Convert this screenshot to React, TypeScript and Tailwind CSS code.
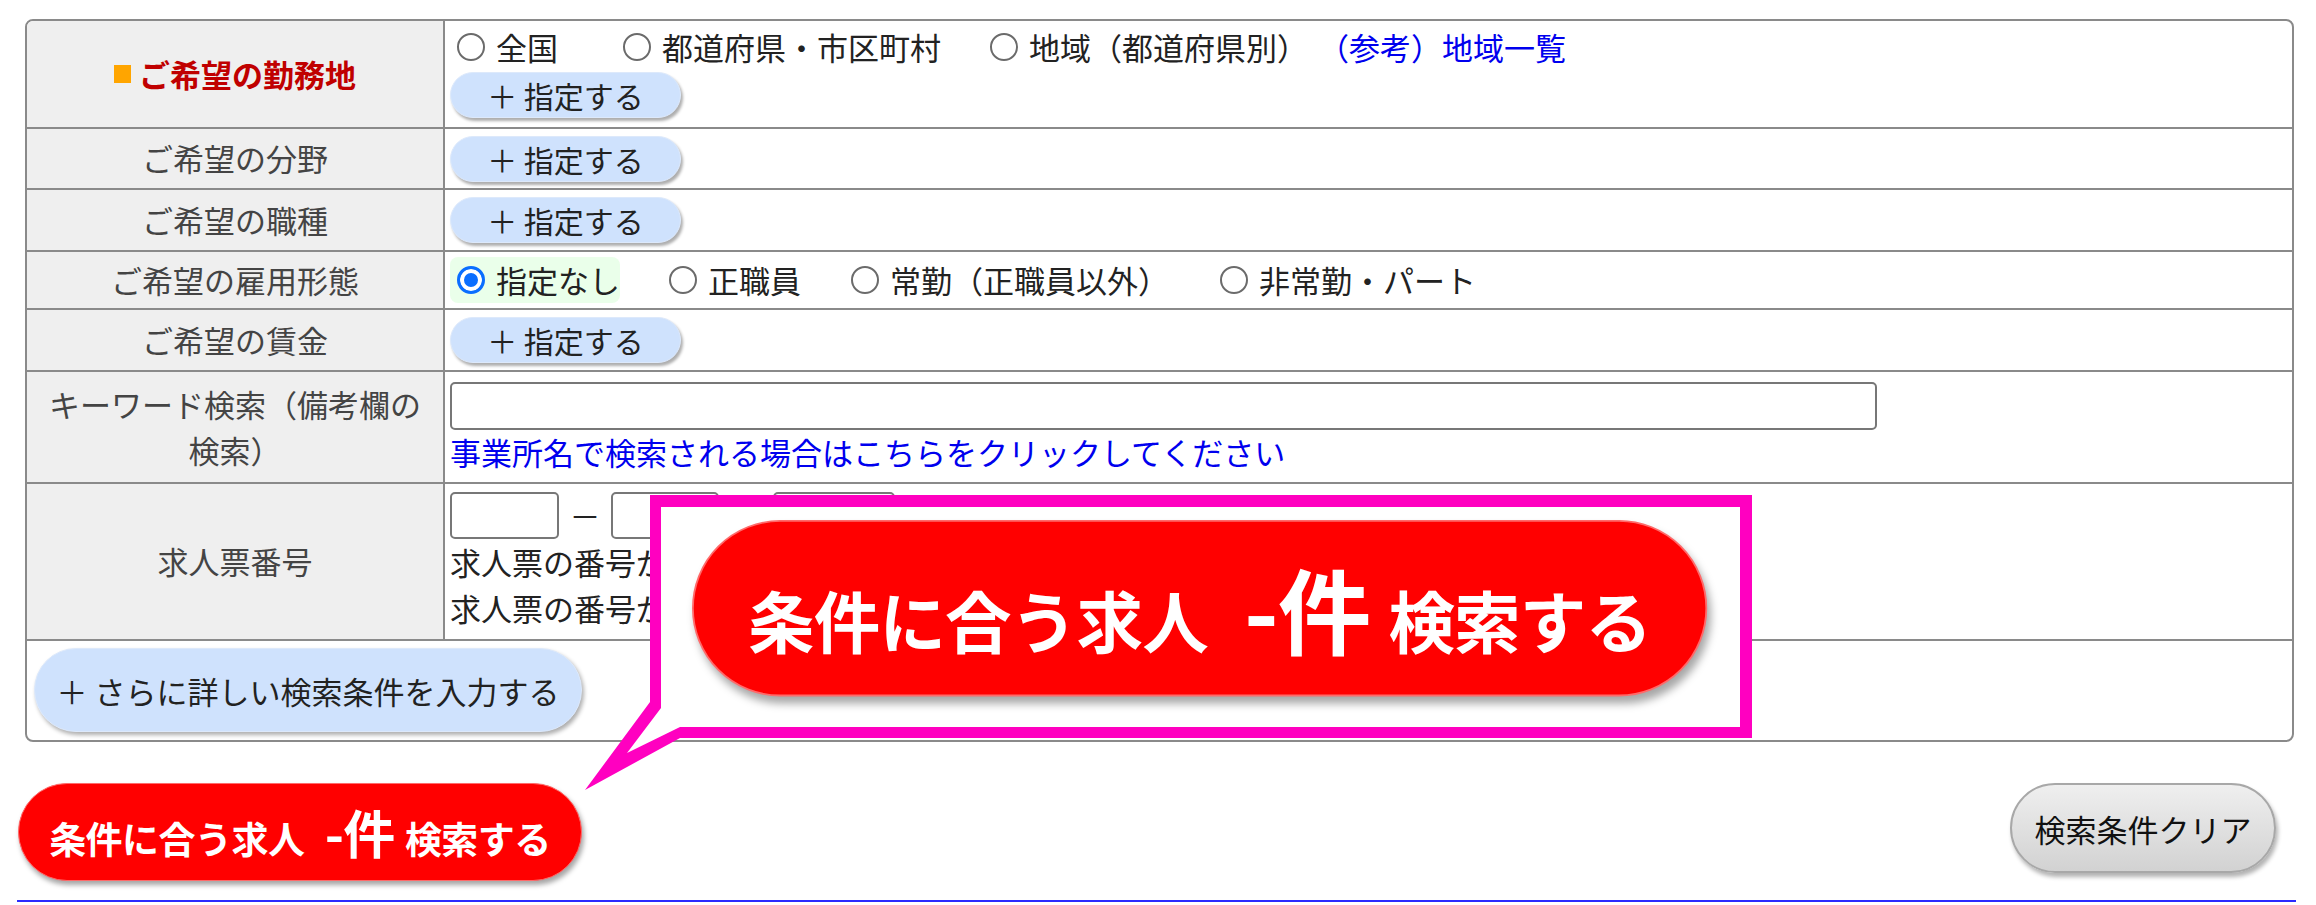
import React from "react";

function Radio({ checked, name }: { checked?: boolean; name: string }) {
  return (
    <input
      type="radio"
      name={name}
      defaultChecked={checked}
      className="appearance-none shrink-0 m-0 w-[28px] h-[28px] rounded-full border-2 border-[#6b6b6b] bg-white checked:border-[3px] checked:border-[#0a6eff] checked:bg-[#0a6eff] checked:shadow-[inset_0_0_0_4px_#ffffff]"
    />
  );
}

function Opt({
  label,
  name,
  checked,
  className,
}: {
  label: string;
  name: string;
  checked?: boolean;
  className?: string;
}) {
  return (
    <label className={"flex items-center pl-[7px] whitespace-nowrap " + (className ?? "")}>
      <Radio name={name} checked={checked} />
      <span className="ml-[11px]">{label}</span>
    </label>
  );
}

function BlueBtn() {
  return (
    <button className="w-[231px] h-[46px] rounded-full bg-[#cfe2fd] border border-[#dde9fb] shadow-[2px_3px_3px_rgba(0,0,0,0.32)] text-[30px] leading-none text-[#222] flex items-center justify-center whitespace-nowrap">
      <span>＋ 指定する</span>
    </button>
  );
}

function RedBtn() {
  return (
    <div className="w-[564px] h-[98px] rounded-full bg-[#ff0000] border border-[#ff6a6a] shadow-[2px_4px_5px_rgba(0,0,0,0.35)] flex items-center justify-center text-white font-bold">
      <span className="whitespace-nowrap leading-none tracking-[-0.5px]">
        <span className="text-[37px]">条件に合う求人</span>
        <span className="text-[52px] ml-[20px]">-件</span>
        <span className="text-[37px] ml-[10px]">検索する</span>
      </span>
    </div>
  );
}

function Head({ children }: { children: React.ReactNode }) {
  return (
    <div className="w-[418px] shrink-0 bg-[#efefef] border-r-2 border-[#8a8a8a] flex items-center justify-center text-center px-[12px] text-[#444]">
      {children}
    </div>
  );
}

export default function App() {
  return (
    <div className="relative w-[2316px] h-[905px] overflow-hidden bg-white font-['Noto_Sans_CJK_JP','Noto_Sans',sans-serif] text-[31px] text-[#222]">
      <div className="pt-[19px] pl-[25px] pr-[22px]">
        <div className="border-2 border-[#8a8a8a] rounded-[8px] overflow-hidden">
          {/* Row 1 */}
          <div className="flex h-[106px]">
            <Head>
              <div className="flex items-center font-bold text-[#c00000]">
                <span className="inline-block w-[17px] h-[18px] bg-[#ffa500] mr-[8px]" />
                <span>ご希望の勤務地</span>
              </div>
            </Head>
            <div className="flex-1 pl-[5px] pt-[4px] flex flex-col">
              <div className="flex items-center h-[44px]">
                <Opt name="area" label="全国" />
                <Opt name="area" label="都道府県・市区町村" className="ml-[58px]" />
                <Opt name="area" label="地域（都道府県別）" className="ml-[42px]" />
                <a className="ml-[10px] text-[#0000ee] whitespace-nowrap">（参考）地域一覧</a>
              </div>
              <div className="mt-[3px]">
                <BlueBtn />
              </div>
            </div>
          </div>
          {/* Row 2 */}
          <div className="flex h-[61px] border-t-2 border-[#8a8a8a]">
            <Head>ご希望の分野</Head>
            <div className="flex-1 pl-[5px] flex items-center">
              <BlueBtn />
            </div>
          </div>
          {/* Row 3 */}
          <div className="flex h-[62px] border-t-2 border-[#8a8a8a]">
            <Head>ご希望の職種</Head>
            <div className="flex-1 pl-[5px] flex items-center">
              <BlueBtn />
            </div>
          </div>
          {/* Row 4 */}
          <div className="flex h-[58px] border-t-2 border-[#8a8a8a]">
            <Head>ご希望の雇用形態</Head>
            <div className="flex-1 pl-[5px] flex items-center">
              <Opt name="emp" label="指定なし" checked className="bg-[#eaffea] rounded-[8px] h-[46px]" />
              <Opt name="emp" label="正職員" className="ml-[42px]" />
              <Opt name="emp" label="常勤（正職員以外）" className="ml-[43px]" />
              <Opt name="emp" label="非常勤・パート" className="ml-[44px]" />
            </div>
          </div>
          {/* Row 5 */}
          <div className="flex h-[62px] border-t-2 border-[#8a8a8a]">
            <Head>ご希望の賃金</Head>
            <div className="flex-1 pl-[5px] flex items-center">
              <BlueBtn />
            </div>
          </div>
          {/* Row 6 */}
          <div className="flex h-[112px] border-t-2 border-[#8a8a8a]">
            <Head>
              <div className="leading-[46px]">
                キーワード検索（備考欄の
                <br />
                検索）
              </div>
            </Head>
            <div className="flex-1 pl-[5px] pt-[10px] flex flex-col">
              <input className="w-[1427px] h-[48px] border-2 border-[#777] rounded-[5px] bg-white" />
              <a className="mt-[2px] leading-[40px] text-[#0000ee] whitespace-nowrap">
                事業所名で検索される場合はこちらをクリックしてください
              </a>
            </div>
          </div>
          {/* Row 7 */}
          <div className="flex h-[157px] border-t-2 border-[#8a8a8a]">
            <Head>求人票番号</Head>
            <div className="flex-1 pl-[5px] pt-[8px] flex flex-col">
              <div className="flex items-center h-[47px]">
                <input className="w-[109px] h-[47px] border-2 border-[#777] rounded-[5px] bg-white" />
                <span className="w-[52px] text-center">－</span>
                <input className="w-[108px] h-[47px] border-2 border-[#777] rounded-[5px] bg-white" />
                <span className="w-[54px] text-center">－</span>
                <input className="w-[122px] h-[47px] border-2 border-[#777] rounded-[5px] bg-white" />
              </div>
              <div className="leading-[46px] whitespace-nowrap">求人票の番号がわかる場合は入力してください。</div>
              <div className="leading-[46px] whitespace-nowrap">求人票の番号が不明な場合は空欄のままです。</div>
            </div>
          </div>
          {/* Row 8 */}
          <div className="h-[101px] border-t-2 border-[#8a8a8a] pl-[7px] pt-[7px]">
            <button className="w-[548px] h-[84px] rounded-full bg-[#cfe2fd] border border-[#dde9fb] shadow-[2px_3px_4px_rgba(0,0,0,0.32)] text-[31px] leading-none text-[#222] flex items-center justify-center whitespace-nowrap">
              ＋ さらに詳しい検索条件を入力する
            </button>
          </div>
        </div>
      </div>

      {/* Bottom buttons */}
      <div className="mt-[41px] pl-[18px] pr-[40px] flex items-start justify-between">
        <RedBtn />
        <button className="w-[266px] h-[90px] rounded-full border-2 border-[#a8a8a8] bg-linear-to-b from-[#efefef] to-[#d2d2d2] shadow-[2px_4px_4px_rgba(0,0,0,0.3)] text-[31px] leading-none text-[#111] flex items-center justify-center whitespace-nowrap">
          検索条件クリア
        </button>
      </div>
      <div className="mt-[19px] ml-[17px] mr-[20px] h-[2px] bg-[#2b2bff]" />

      {/* Callout overlay */}
      <svg
        className="absolute left-[580px] top-[490px]"
        width="1180"
        height="310"
        viewBox="0 0 1180 310"
      >
        <polygon points="70,5 1172,5 1172,248 100,248 5,300 70,212" fill="#ff00c0" />
        <polygon points="81,17 1160,17 1160,237 100,237 47,263 81,218" fill="#ffffff" />
      </svg>
      <div className="absolute left-[692px] top-[520px] origin-top-left scale-[1.8]">
        <RedBtn />
      </div>
    </div>
  );
}
